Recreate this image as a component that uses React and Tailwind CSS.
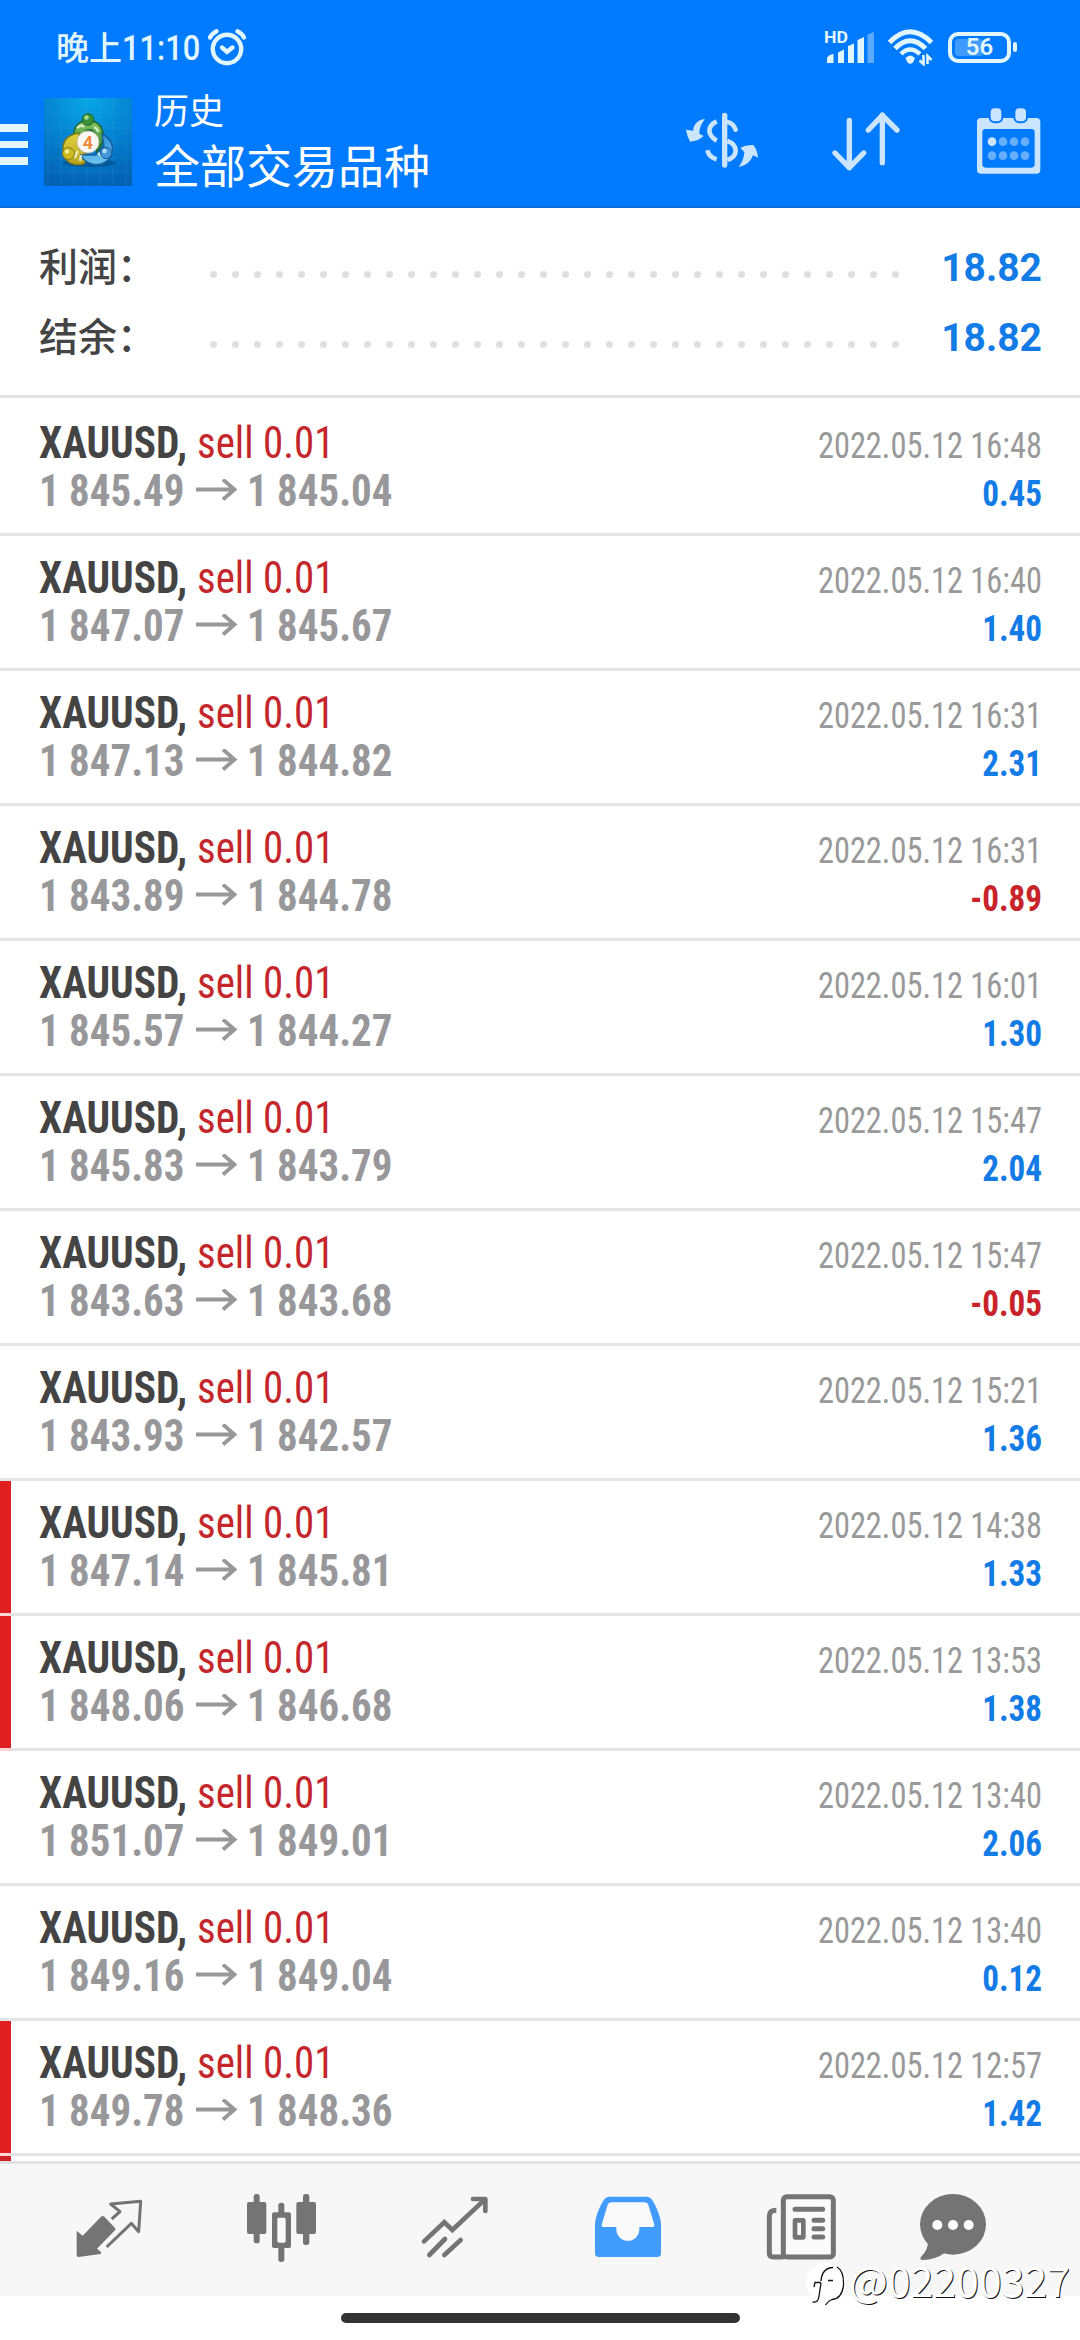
const deals = [
  { open: '1 845.49', close: '1 845.04', time: '2022.05.12 16:48', profit: '0.45' },
  { open: '1 847.07', close: '1 845.67', time: '2022.05.12 16:40', profit: '1.40' },
  { open: '1 847.13', close: '1 844.82', time: '2022.05.12 16:31', profit: '2.31' },
  { open: '1 843.89', close: '1 844.78', time: '2022.05.12 16:31', profit: '-0.89' },
  { open: '1 845.57', close: '1 844.27', time: '2022.05.12 16:01', profit: '1.30' },
  { open: '1 845.83', close: '1 843.79', time: '2022.05.12 15:47', profit: '2.04' },
  { open: '1 843.63', close: '1 843.68', time: '2022.05.12 15:47', profit: '-0.05' },
  { open: '1 843.93', close: '1 842.57', time: '2022.05.12 15:21', profit: '1.36' },
  { open: '1 847.14', close: '1 845.81', time: '2022.05.12 14:38', profit: '1.33', marked: true },
  { open: '1 848.06', close: '1 846.68', time: '2022.05.12 13:53', profit: '1.38', marked: true },
  { open: '1 851.07', close: '1 849.01', time: '2022.05.12 13:40', profit: '2.06' },
  { open: '1 849.16', close: '1 849.04', time: '2022.05.12 13:40', profit: '0.12' },
  { open: '1 849.78', close: '1 848.36', time: '2022.05.12 12:57', profit: '1.42', marked: true },
];

const summary = [
  { label: '利润：', value: '18.82' },
  { label: '结余：', value: '18.82' },
];

function StatusBar() {
  return (
    <div className="flex h-[94px] items-center pl-[56px] pr-[63px] text-[#e2f6ff]">
      <div className="flex items-baseline pt-[4px] text-[34px] leading-[40px] font-medium">
        <span className="text-[33px]">晚上</span>
        <span className="w-[78px] origin-left scale-x-88 text-[35px]">11:10</span>
      </div>
      <svg className="ml-[7px] size-[40px]" viewBox="0 0 40 40" fill="none" stroke="currentColor" strokeWidth="4.4" strokeLinecap="round">
        <circle cx="20" cy="22" r="14.2" />
        <path d="M3 10.5 Q5 6.5 9.5 4.2M37 10.5 Q35 6.5 30.5 4.2" />
        <path d="M15 20.5 L20 24.8 L25.5 20.5" />
      </svg>

      <div className="ml-auto flex items-center">
        <svg className="h-[36px] w-[52px]" viewBox="0 0 52 36" fill="currentColor">
          <text x="0" y="13.5" fontSize="16" fontWeight="700" textLength="24" lengthAdjust="spacingAndGlyphs">HD</text>
          <path d="M3 34V30Q3 26 9.500 25V34Z M14 34V23.500L20 20.500V34Z M24 34V17L30 14.500V34Z M33.500 34V11L40 8V34Z" />
          <path d="M43.500 34V5.500L50 3V34Z" opacity=".4" />
        </svg>
        <svg className="ml-[10px] h-[38px] w-[50px]" viewBox="0 0 50 38" fill="none" stroke="currentColor">
          <path d="M3.500 14.500Q24 -7 45.500 14.500" strokeWidth="5" />
          <path d="M9 20.500Q24 5 39.500 20.500" strokeWidth="5" />
          <path d="M15 26Q24 17 34 26" strokeWidth="4.500" />
          <path d="M19.500 30Q24 25 29 30L27 34.500Q24 37 21.500 34.500Z" fill="currentColor" stroke="none" />
          <path d="M37.500 27V36L33.500 32.500M41.500 36V28L45.500 32" strokeWidth="2.600" />
        </svg>
        <div className="relative ml-[12px] flex h-[31px] w-[63px] items-center justify-center rounded-[10px] border-4 border-current">
          <div className="absolute top-[3px] left-[3px] h-[17px] w-[28px] rounded-[3px] bg-white/25" />
          <span className="relative text-[24px] leading-none font-semibold">56</span>
        </div>
        <div className="ml-[2px] h-[10px] w-[4px] rounded-full bg-current" />
      </div>
    </div>
  );
}

function Logo() {
  return (
    <svg className="size-[88px]" viewBox="0 0 88 88">
      <defs>
        <radialGradient id="sky" cx=".5" cy="0" r="1">
          <stop offset="0" stopColor="#08a8e6" />
          <stop offset=".55" stopColor="#0480cf" />
          <stop offset="1" stopColor="#0362b4" />
        </radialGradient>
        <linearGradient id="green" x1="0" y1="0" x2="0" y2="1">
          <stop offset="0" stopColor="#8ccb62" />
          <stop offset="1" stopColor="#257a2f" />
        </linearGradient>
        <linearGradient id="gold" x1="0" y1="0" x2="0" y2="1">
          <stop offset="0" stopColor="#e3d243" />
          <stop offset="1" stopColor="#b8a41a" />
        </linearGradient>
        <linearGradient id="blue" x1="0" y1="0" x2="0" y2="1">
          <stop offset="0" stopColor="#2c8fd8" />
          <stop offset="1" stopColor="#6fc4f0" />
        </linearGradient>
      </defs>
      <rect width="88" height="88" fill="url(#sky)" />
      <path d="M4 0V88M17 0V88M30 0V88M43 0V88M56 0V88M69 0V88M82 0V88M0 15H88M0 30H88M0 45H88M0 60H88M0 74H88" stroke="#4cc0f0" strokeWidth="1" opacity=".15" />
      <ellipse cx="45" cy="65" rx="27" ry="4" fill="#023f73" opacity=".5" />
      <path d="M30 44Q27 24 44 22Q61 24 59 42Q57 50 53 54L50 34Q44 28 37 38Z" fill="url(#green)" stroke="#1d6630" strokeWidth="1.500" />
      <path d="M35 35Q15 38 20 58Q25 69 39 66L46 60L36 51Z" fill="url(#gold)" stroke="#7d7a18" strokeWidth="1.500" />
      <path d="M58 36Q71 42 68 57Q61 69 48 66Q40 64 37 57L52 57L60 48Z" fill="url(#blue)" stroke="#16619f" strokeWidth="1.500" />
      <path d="M31 60Q32 55 34 53M36 63Q37 59 37 57M54 55L59 59M33 30Q37 26 40 29M50 29Q54 31 54 34" stroke="#eef7e0" strokeWidth="2.500" fill="none" opacity=".8" />
      <circle cx="44" cy="21.500" r="5.800" fill="#379136" stroke="#1b6129" />
      <circle cx="42.500" cy="19.500" r="2.200" fill="#a5dd8c" />
      <circle cx="24.500" cy="55.500" r="6" fill="#cdb920" stroke="#8a7d14" />
      <circle cx="23" cy="53.500" r="2.200" fill="#f5ee9a" />
      <circle cx="62" cy="55" r="5.600" fill="#4596d8" stroke="#17609f" />
      <circle cx="60.500" cy="53" r="2.200" fill="#b6e0fa" />
      <circle cx="44" cy="44" r="11" fill="#fbf8f4" stroke="#c3bfae" />
      <text x="44" y="50.500" textAnchor="middle" fontSize="18" fontWeight="600" fill="#ee8533">4</text>
    </svg>
  );
}

function Header() {
  return (
    <header className="flex h-[208px] flex-col border-b-2 border-[#0a6cdb] bg-[#007aff]">
      <StatusBar />
      <div className="flex">
        <div className="mt-[30px] flex w-[28px] flex-col gap-[9px]">
          <div className="h-[7.500px] bg-[#e2f6ff]" />
          <div className="h-[7.500px] bg-[#e2f6ff]" />
          <div className="h-[7.500px] bg-[#e2f6ff]" />
        </div>
        <div className="mt-[4px] ml-[16px]">
          <Logo />
        </div>
        <div className="ml-[22px] text-white">
          <div className="mt-[-6px] text-[35px] leading-[50px]">历史</div>
          <div className="mt-[1px] text-[46px] leading-[56px]">全部交易品种</div>
        </div>
        <div className="mt-[13px] mr-[35px] ml-auto flex gap-[71.500px] text-[#cbe5ff]">
          <svg className="size-[72px]" viewBox="48 36 216 216" fill="none" stroke="currentColor" strokeWidth="14">
            <path d="M164 61V210" strokeWidth="16" strokeLinecap="round" />
            <path d="M140 79Q118 90 118 107Q119 125 140 137" />
            <path d="M112 166Q117 187 140 193" />
            <path d="M172 81Q190 84 197 104" strokeLinecap="round" />
            <path d="M172 138Q197 146 197 168Q195 189 172 194" />
            <path d="M105 72Q86 74 76 87Q70 95 69 107L48 104Q51 124 60 140Q86 138 101 123L88 116Q88 92 105 72Z" fill="currentColor" stroke="none" />
            <path d="M206 217Q222 194 223 172L211 158Q230 148 250 150Q262 165 264 188L249 181Q240 209 206 217Z" fill="currentColor" stroke="none" />
          </svg>
          <svg className="size-[72px]" viewBox="477 36 216 216" fill="none" stroke="currentColor" strokeWidth="16" strokeLinecap="round" strokeLinejoin="round">
            <path d="M535 76V218M492 174L535 218L578 174" />
            <path d="M634 203V60M592 105L634 61L678 105" />
          </svg>
          <svg className="size-[72px]" viewBox="0 0 216 216" fill="currentColor">
            <path fillRule="evenodd" d="M24 33H190Q202 33 202 45V188Q202 200 190 200H24Q12 200 12 188V45Q12 33 24 33ZM38 66Q28 66 28 76V172Q28 182 38 182H175Q185 182 185 172V76Q185 66 175 66Z" />
            <rect x="50" y="1" width="38" height="45" rx="15" stroke="#007aff" strokeWidth="6" />
            <rect x="124" y="1" width="38" height="45" rx="15" stroke="#007aff" strokeWidth="6" />
            <circle cx="57" cy="104" r="13" />
            <g opacity=".5">
              <circle cx="90" cy="104" r="13" />
              <circle cx="123" cy="104" r="13" />
              <circle cx="156" cy="104" r="13" />
              <circle cx="57" cy="146" r="13" />
              <circle cx="90" cy="146" r="13" />
              <circle cx="123" cy="146" r="13" />
              <circle cx="156" cy="146" r="13" />
            </g>
          </svg>
        </div>
      </div>
    </header>
  );
}

function SummaryRow({ label, value }) {
  return (
    <div className="flex h-[70px] items-center">
      <span className="w-[171px] pt-[3px] text-[39px] leading-[60px] font-medium text-[#444]">{label}</span>
      <div className="mt-[17px] flex gap-[15px]">
        {Array.from({ length: 32 }).map((_, i) => (
          <div key={i} className="size-[7px] rounded-full bg-[#dfdfdf]" />
        ))}
      </div>
      <span className="ml-auto pt-[3px] text-[39px] leading-[60px] font-bold text-[#127be6]">{value}</span>
    </div>
  );
}

function DealRow({ deal }) {
  const loss = deal.profit.startsWith('-');
  return (
    <div className="flex h-[135px]">
      <div className="w-[11px]">
        {deal.marked && (
          <>
            <div className="h-[132px] bg-[#e02020]" />
            <div className="h-[3px] bg-[#f9d5d5]" />
          </>
        )}
        {!deal.marked && <div className="mt-[132px] h-[3px] bg-[#e4e4e4]" />}
      </div>
      <div className="flex-1 border-b-[3px] border-[#e4e4e4] pt-[18px] pr-[38px] pl-[28px] leading-[48px] whitespace-nowrap [font-stretch:75%]">
        <div className="flex h-[48px] items-baseline">
          <span className="w-[158px] origin-left scale-x-94 text-[44px] font-bold text-[#444]">XAUUSD,</span>
          <span className="origin-left scale-x-93 text-[44px] text-[#c4262c]">sell 0.01</span>
          <span className="ml-auto origin-right scale-x-90 text-[36px] text-[#999]">{deal.time}</span>
        </div>
        <div className="flex h-[48px] items-baseline text-[44px] font-bold text-[#98989b]">
          <span className="w-[157px] origin-left scale-x-93">{deal.open}</span>
          <svg className="h-[24px] w-[42px] self-center" viewBox="0 0 42 24" fill="none" stroke="currentColor" strokeWidth="3.800">
            <path d="M0 10.500H39M27 0.500L38.500 10.500L27 20.500" />
          </svg>
          <span className="ml-[9px] origin-left scale-x-93">{deal.close}</span>
          <span className={loss ? 'ml-auto origin-right scale-x-92 text-[36px] text-[#c8222a]' : 'ml-auto origin-right scale-x-92 text-[36px] text-[#127be6]'}>
            {deal.profit}
          </span>
        </div>
      </div>
    </div>
  );
}

function TabBar() {
  return (
    <nav className="flex h-[135px] border-t-[3px] border-[#e2e2e2] bg-[#f7f7f7] pt-[28px] pl-[22px] text-[#747474]">
      <div className="flex w-[173px] justify-center">
        <svg className="size-[72px]" viewBox="0 0 216 216" fill="none" stroke="currentColor" strokeWidth="9" strokeLinejoin="round">
          <path d="M11 116L29 131L84 74Q89 70 94 74L126 108Q129 112 126 115L72 170L85 181L83 186L16 195Q11 195 11 190Z" fill="currentColor" stroke="none" />
          <path d="M116 81L141 59L113 36L203 28L197 119L175 94L101 165" />
        </svg>
      </div>
      <div className="flex w-[173px] justify-center">
        <svg className="size-[72px]" viewBox="0 0 216 216" fill="currentColor">
          <rect x="23" y="6" width="18" height="148" rx="8" />
          <rect x="3" y="30" width="58" height="96" rx="6" />
          <rect x="97" y="32" width="18" height="178" rx="8" />
          <rect x="78" y="61" width="57" height="107" rx="6" />
          <rect x="94" y="77" width="25" height="75" rx="5" fill="#fafafa" />
          <rect x="171" y="6" width="19" height="153" rx="8" />
          <rect x="151" y="30" width="59" height="96" rx="6" />
        </svg>
      </div>
      <div className="flex w-[173px] justify-center">
        <svg className="size-[72px]" viewBox="0 0 216 216" fill="none" stroke="currentColor" strokeWidth="14" strokeLinecap="round" strokeLinejoin="round">
          <path d="M15 148L76 91L100 114L197 23" strokeLinejoin="miter" />
          <path d="M162 21H199V57" />
          <path d="M31 189L78 141M76 189L125 144" />
        </svg>
      </div>
      <div className="flex w-[173px] justify-center text-[#429cfd]">
        <svg className="size-[72px]" viewBox="0 0 216 216" fill="currentColor">
          <path d="M9 95Q12 65 30 33Q40 14 50 14H166Q176 14 186 33Q204 65 207 95V184Q207 195 196 195H20Q9 195 9 184Z" />
          <path fill="#fafafa" d="M58 31H158Q166 31 170 41L187 98Q188 105 180 105H142V112A34.500 34.500 0 0 1 73 112V105H36Q28 105 29 98L46 41Q50 31 58 31Z" />
        </svg>
      </div>
      <div className="flex w-[173px] justify-center">
        <svg className="size-[72px]" viewBox="0 0 216 216" fill="none" stroke="currentColor" strokeWidth="15" strokeLinecap="round">
          <rect x="55" y="14" width="150" height="181" rx="10" fill="#fafafa" />
          <path d="M34 55Q13 55 13 72V183Q13 195 25 195H56" strokeLinecap="butt" />
          <path d="M90 52H173M147 85H173M147 110H173M147 135H173" />
          <rect x="90" y="85" width="25" height="51" strokeWidth="14" strokeLinejoin="round" />
        </svg>
      </div>
      <div className="flex w-[132px] justify-center">
        <svg className="size-[72px]" viewBox="0 0 216 216" fill="currentColor">
          <ellipse cx="108" cy="97" rx="99" ry="91" />
          <path d="M32 145Q36 172 11 196Q7 204 18 204Q55 203 84 182Z" />
          <g fill="#fff">
            <circle cx="61" cy="99" r="15" />
            <circle cx="108" cy="99" r="15" />
            <circle cx="155" cy="99" r="15" />
          </g>
        </svg>
      </div>
    </nav>
  );
}

function Watermark() {
  return (
    <div className="absolute top-[2249px] left-[804px] flex items-center text-white">
      <svg className="h-[60px] w-[45px]" viewBox="0 0 45 60">
        <circle cx="22" cy="34" r="20" fill="#fff" />
        <path d="M8.500 53Q14.500 54 15 47L17 34M10 38L11 33.500H17M17 32Q18 19 29 18.500M24 31.500H29M33 18Q40 22 39.500 36Q38 50 28 50.500Q24 52 21.500 56" fill="none" stroke="#111" strokeWidth="1.300" />
      </svg>
      <span className="text-[41px] leading-[60px] [text-shadow:1px_1px_0_#111] font-['Noto_Sans_CJK_SC',sans-serif]">@02200327</span>
    </div>
  );
}

export default function App() {
  return (
    <div className="relative flex h-[2340px] w-[1080px] flex-col overflow-hidden bg-white font-['Roboto','Noto_Sans_CJK_SC',sans-serif]">
      <Header />
      <section className="h-[190px] border-b-[3px] border-[#e2e2e2] pt-[23px] pr-[38px] pl-[39px]">
        {summary.map((s) => (
          <SummaryRow key={s.label} label={s.label} value={s.value} />
        ))}
      </section>
      <main className="h-[1763px] overflow-hidden pt-[3px]">
        {deals.map((d, i) => (
          <DealRow key={i} deal={d} />
        ))}
        <div className="h-[5px] w-[11px] bg-[#d02226]" />
      </main>
      <TabBar />
      <div className="mx-auto mt-[17px] h-[10px] w-[399px] rounded-full bg-[#333]" />
      <Watermark />
    </div>
  );
}
